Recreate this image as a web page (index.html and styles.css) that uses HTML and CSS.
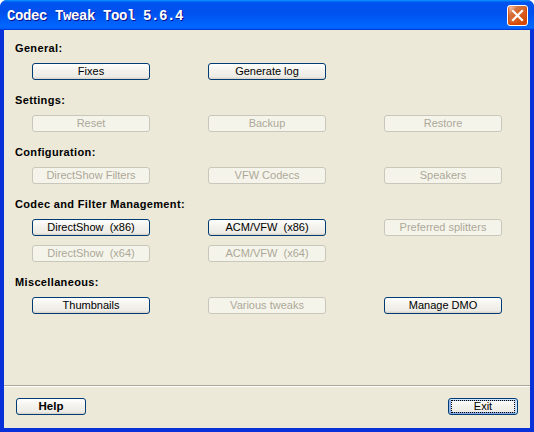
FILE: index.html
```html
<!DOCTYPE html>
<html>
<head>
<meta charset="utf-8">
<title>Codec Tweak Tool 5.6.4</title>
<link rel="stylesheet" href="styles.css">
</head>
<body>
<div class="window">
  <div class="titlebar">
    <span class="title">Codec Tweak Tool 5.6.4</span>
    <span class="close" aria-label="Close">
      <svg width="13" height="13" viewBox="0 0 13 13"><path d="M2 2 L11 11 M11 2 L2 11" stroke="#fff" stroke-width="2.2" stroke-linecap="square"/></svg>
    </span>
  </div>
  <div class="frame">
    <div class="content">
      <section class="section">
        <div class="label">General:</div>
        <div class="btns">
          <button class="btn">Fixes</button>
          <button class="btn">Generate log</button>
        </div>
      </section>
      <section class="section">
        <div class="label">Settings:</div>
        <div class="btns">
          <button class="btn" disabled>Reset</button>
          <button class="btn" disabled>Backup</button>
          <button class="btn" disabled>Restore</button>
        </div>
      </section>
      <section class="section">
        <div class="label">Configuration:</div>
        <div class="btns">
          <button class="btn" disabled>DirectShow Filters</button>
          <button class="btn" disabled>VFW Codecs</button>
          <button class="btn" disabled>Speakers</button>
        </div>
      </section>
      <section class="section">
        <div class="label">Codec and Filter Management:</div>
        <div class="btns">
          <button class="btn">DirectShow&nbsp; (x86)</button>
          <button class="btn">ACM/VFW&nbsp; (x86)</button>
          <button class="btn" disabled>Preferred splitters</button>
          <button class="btn" disabled>DirectShow&nbsp; (x64)</button>
          <button class="btn" disabled>ACM/VFW&nbsp; (x64)</button>
        </div>
      </section>
      <section class="section">
        <div class="label">Miscellaneous:</div>
        <div class="btns">
          <button class="btn">Thumbnails</button>
          <button class="btn" disabled>Various tweaks</button>
          <button class="btn">Manage DMO</button>
        </div>
      </section>
    </div>
    <div class="sep"></div>
    <div class="footer">
      <button class="btn small bold">Help</button>
      <button class="btn small default"><span class="focus">Exit</span></button>
    </div>
  </div>
</div>
</body>
</html>
```
FILE: styles.css
```css
* { box-sizing: border-box; }
html, body { margin: 0; padding: 0; background: #fff; }
body { width: 534px; height: 432px; overflow: hidden; font-family: "Liberation Sans", Arial, sans-serif; font-size: 11px; }

.window {
  width: 534px;
  height: 432px;
  display: flex;
  flex-direction: column;
  border-radius: 7px 7px 0 0;
  overflow: hidden;
  background: #0831d9;
}

.titlebar {
  height: 30px;
  flex: none;
  display: flex;
  align-items: center;
  justify-content: space-between;
  padding: 0 6px 0 7px;
  background: linear-gradient(180deg, #0997ff, #0053ee 8%, #0050ee 40%, #0066ff 88%, #0066ff 93%, #005bff 95%, #003dd7 96%, #003dd7);
}

.title {
  font-family: "Liberation Mono", "Courier New", monospace;
  font-weight: bold;
  font-size: 14px;
  letter-spacing: -0.4px;
  color: #fff;
  text-shadow: 1px 1px #0f1089;
  padding-top: 1px;
}

.close {
  width: 21px;
  height: 21px;
  border: 1px solid #fff;
  border-radius: 3px;
  display: flex;
  align-items: center;
  justify-content: center;
  background: radial-gradient(circle at 90% 90%, #cc4600 0, #dc6527 55%, #cd7546 70%, #ffccb2 90%, #fff 100%);
  box-shadow: inset 0 -1px 2px 1px #da4600;
}

.frame {
  flex: 1;
  display: flex;
  flex-direction: column;
  margin: 0 4px 4px;
  background: #ece9d8;
}

.content {
  flex: 1;
  padding: 12px 0 0 11px;
  display: flex;
  flex-direction: column;
  gap: 14px;
}

.section {
  display: flex;
  flex-direction: column;
  gap: 8px;
}

.label {
  font-weight: bold;
  line-height: 13px;
  letter-spacing: 0.35px;
  color: #000;
}

.btns {
  display: grid;
  grid-template-columns: repeat(3, 118px);
  column-gap: 58px;
  row-gap: 9px;
  padding-left: 17px;
}

.btn {
  height: 17px;
  padding: 0;
  margin: 0;
  font-family: "Liberation Sans", Arial, sans-serif;
  font-size: 11px;
  line-height: 15px;
  color: #000;
  border: 1px solid #003c74;
  border-radius: 3px;
  background: linear-gradient(180deg, #fff, #f4f3ee 40%, #ecebe6 86%, #d6d0c5);
  text-align: center;
}

.btn:disabled {
  color: #aca899;
  border-color: #c9c7ba;
  background: #f5f4ea;
}

.sep {
  height: 2px;
  flex: none;
  border-top: 1px solid #aca899;
  border-bottom: 1px solid #fff;
  margin-top: -1px;
}

.footer {
  flex: none;
  display: flex;
  justify-content: space-between;
  padding: 11px 12px 13px;
}

.btn.small { width: 70px; }
.btn.bold { font-weight: bold; font-size: 11.5px; }
.btn.default {
  padding: 1px 2px;
  box-shadow: inset -1px 1px #cee7ff, inset 1px 2px #98b8ea, inset -2px 2px #bcd4f6, inset 1px -1px #89ade4, inset 2px -2px #89ade4;
}
.focus {
  display: block;
  height: 13px;
  line-height: 11px;
  border: 1px dotted #000;
}
```
